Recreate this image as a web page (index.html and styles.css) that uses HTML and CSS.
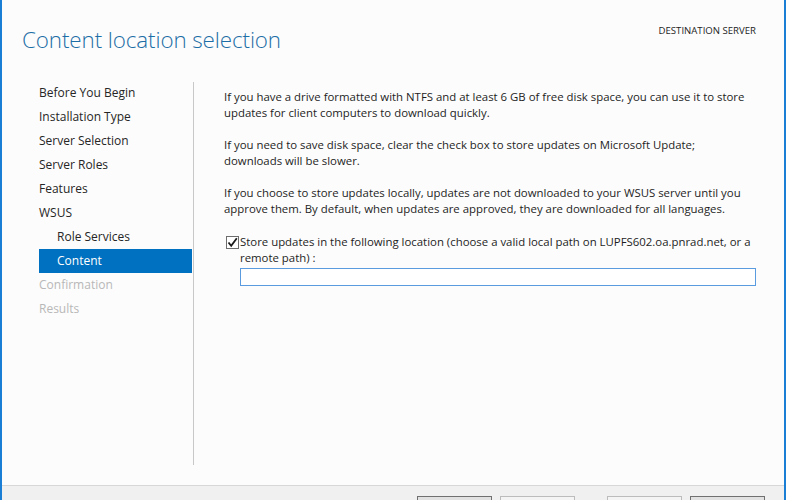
FILE: index.html
```html
<!DOCTYPE html>
<html>
<head>
<meta charset="utf-8">
<link rel="stylesheet" href="styles.css">
</head>
<body>
<div class="window">
  <header class="header">
    <h1 class="title">Content location selection</h1>
    <div class="dest">DESTINATION SERVER</div>
  </header>
  <div class="main">
    <nav class="nav">
      <div class="item">Before You Begin</div>
      <div class="item">Installation Type</div>
      <div class="item">Server Selection</div>
      <div class="item">Server Roles</div>
      <div class="item">Features</div>
      <div class="item">WSUS</div>
      <div class="item sub">Role Services</div>
      <div class="item sub active">Content</div>
      <div class="item disabled">Confirmation</div>
      <div class="item disabled">Results</div>
    </nav>
    <div class="divider"></div>
    <section class="content">
      <p>If you have a drive formatted with NTFS and at least 6 GB of free disk space, you can use it to store<br>updates for client computers to download quickly.</p>
      <p>If you need to save disk space, clear the check box to store updates on Microsoft Update;<br>downloads will be slower.</p>
      <p>If you choose to store updates locally, updates are not downloaded to your WSUS server until you<br>approve them. By default, when updates are approved, they are downloaded for all languages.</p>
      <div class="check-row">
        <span class="checkbox"><svg width="11" height="11" viewBox="0 0 11 11"><path d="M1.5 5.5 L4.2 8.8 L9.8 1.2" fill="none" stroke="#1b1b1b" stroke-width="1.8"/></svg></span>
        <div class="check-body">
          <div class="check-label">Store updates in the following location (choose a valid local path on LUPFS602.oa.pnrad.net, or a<br>remote path) :</div>
          <div class="path-input"></div>
        </div>
      </div>
    </section>
  </div>
  <footer class="footer">
    <div class="btn"></div>
    <div class="btn light"></div>
    <div class="btn light gap"></div>
    <div class="btn"></div>
  </footer>
</div>
</body>
</html>
```
FILE: styles.css
```css
html, body {
  margin: 0;
  padding: 0;
  background: #fcfcfc;
}
body {
  width: 786px;
  height: 500px;
  overflow: hidden;
  font-family: "Open Sans", "Noto Sans", sans-serif;
  color: #1e1e1e;
}
.window {
  box-sizing: border-box;
  width: 786px;
  height: 500px;
  border-left: 2px solid #1a7fd4;
  border-right: 2px solid #1a7fd4;
  display: flex;
  flex-direction: column;
}
.header {
  height: 80px;
  flex: none;
  display: flex;
  justify-content: space-between;
  align-items: flex-start;
}
.title {
  margin: 24px 0 0 20px;
  font-size: 22.4px;
  font-weight: 300;
  color: #1d6ea6;
  line-height: 32px;
  letter-spacing: -0.1px;
}
.dest {
  margin: 24px 28px 0 0;
  font-size: 9.6px;
  line-height: 14px;
  color: #1e1e1e;
}
.main {
  flex: 1;
  display: flex;
  min-height: 0;
}
.nav {
  width: 153px;
  padding-left: 37px;
  flex: none;
  font-size: 12px;
}
.item {
  height: 24px;
  line-height: 24px;
  color: #262626;
  white-space: nowrap;
}
.item:first-child {
  margin-top: 1px;
}
.item.sub {
  padding-left: 18px;
}
.item.active {
  background: #0071c0;
  color: #ffffff;
}
.item.disabled {
  color: #b8b8b8;
}
.divider {
  width: 1px;
  background: #c8c8c8;
  margin: 2px 0 20px 1px;
  flex: none;
}
.content {
  flex: 1;
  padding: 9px 0 0 30px;
  font-size: 11.4px;
  line-height: 16px;
  color: #1e1e1e;
}
.content p {
  margin: 0 0 16px 0;
  white-space: nowrap;
}
.check-row {
  display: flex;
  align-items: flex-start;
  margin-top: 17px;
  padding-left: 2px;
}
.checkbox {
  box-sizing: border-box;
  width: 13px;
  height: 13px;
  border: 1px solid #6d6d6d;
  background: #ffffff;
  margin-top: 2px;
  flex: none;
  display: flex;
  align-items: center;
  justify-content: center;
}
.check-body {
  flex: 1;
  padding-left: 1px;
}
.check-label {
  white-space: nowrap;
}
.path-input {
  box-sizing: border-box;
  width: 516px;
  height: 18px;
  margin-top: 2px;
  border: 1px solid #5a9be0;
  background: #ffffff;
}
.footer {
  box-sizing: border-box;
  height: 15px;
  flex: none;
  border-top: 1px solid #d7d7d7;
  background: #f0f0f0;
  display: flex;
  justify-content: flex-end;
  align-items: flex-start;
  padding: 10px 19px 0 0;
  gap: 8px;
}
.btn {
  box-sizing: border-box;
  width: 75px;
  height: 22px;
  border: 1px solid #707070;
  background: #e1e1e1;
  flex: none;
}
.btn.light {
  border-color: #bcbcbc;
  background: #f4f4f4;
}
.btn.gap {
  margin-left: 24px;
}
```
